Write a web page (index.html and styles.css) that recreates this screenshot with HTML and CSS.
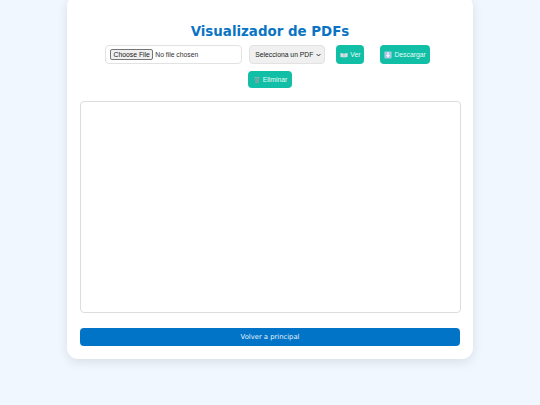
FILE: index.html
```html
<!DOCTYPE html>
<html lang="es">
  <head>
    <meta charset="UTF-8" />
    <meta name="viewport" content="width=device-width, initial-scale=1.0" />
    <title>Visualizador de PDFs</title>
    <link rel="stylesheet" href="styles.css">
  </head>
  <body>
    <div class="container">
      <h1 class="title">Visualizador de PDFs</h1>

      <div class="controls">
        <input type="file" class="file-input" />
        <select class="pdf-select">
          <option>Selecciona un PDF</option>
        </select>
        <button class="action action-ver">
          <svg class="icon" viewBox="0 0 10 10">
            <path d="M0.5 2.5 L4.8 3 V8 L0.5 7.5 Z M5.2 3 L9.5 2.5 V7.5 L5.2 8 Z" fill="#d5dde2" />
          </svg>
          Ver
        </button>
        <button class="action action-descargar">
          <svg class="icon" viewBox="0 0 10 10">
            <rect x="0.5" y="0.5" width="9" height="9" rx="1" fill="#a9c6e4" />
            <path d="M4.2 1.5 H5.8 V5 H7.6 L5 8.3 L2.4 5 H4.2 Z" fill="#f4f7fa" />
          </svg>
          Descargar
        </button>
      </div>

      <div class="controls controls-second">
        <button class="action action-eliminar">
          <svg class="icon" viewBox="0 0 10 10">
            <path d="M1.5 1.2 H8.5 V2.8 H1.5 Z" fill="#7fb5ad" />
            <path d="M2.2 3.2 H7.8 L7.2 9.2 H2.8 Z" fill="#6fa8a0" />
          </svg>
          Eliminar
        </button>
      </div>

      <div class="viewer"></div>

      <button class="back">Volver a principal</button>
    </div>
  </body>
</html>
```

FILE: styles.css
```css
body {
  margin: 0;
  height: 405px;
  overflow: hidden;
  background-color: #f0f7ff;
  font-family: "Liberation Sans", Arial, sans-serif;
}

.container {
  width: 380px;
  height: 336px;
  margin: -5px auto 0;
  padding: 28px 13px 0;
  background-color: white;
  border-radius: 11px;
  box-shadow: 0 3px 11px rgba(0, 0, 0, 0.1);
}

.title {
  margin: 0 0 4px;
  font-family: "DejaVu Sans", Verdana, sans-serif;
  font-size: 13.4px;
  line-height: 18px;
  font-weight: bold;
  text-align: center;
  color: #0a74c4;
}

.controls {
  display: flex;
  justify-content: center;
  align-items: center;
}

.controls-second {
  margin-top: 7px;
}

.file-input {
  box-sizing: border-box;
  width: 137px;
  height: 19px;
  padding: 3px 4px;
  border: 1px solid #e2e2e2;
  border-radius: 4px;
  font-family: "Liberation Sans", Arial, sans-serif;
  font-size: 6.8px;
  color: #333;
}

.file-input::file-selector-button {
  height: 11px;
  width: 43px;
  margin-right: 2px;
  padding: 0;
  border: 1px solid #767676;
  border-radius: 2px;
  background-color: #efefef;
  font-size: 6.8px;
  color: #222;
}

.pdf-select {
  box-sizing: border-box;
  width: 76px;
  height: 19px;
  margin-left: 7px;
  padding: 0 5px;
  border: 1px solid #e2e2e2;
  border-radius: 4px;
  appearance: none;
  background: #f0f0f0 url("data:image/svg+xml,%3Csvg xmlns='http://www.w3.org/2000/svg' viewBox='0 0 8 6'%3E%3Cpath d='M1 1.5 L4 4.5 L7 1.5' fill='none' stroke='%23222' stroke-width='1.5'/%3E%3C/svg%3E") no-repeat right 3px center / 5px 4px;
  font-family: "Liberation Sans", Arial, sans-serif;
  font-size: 6.8px;
  color: #222;
}

.action {
  display: flex;
  align-items: center;
  gap: 2px;
  height: 19px;
  padding: 0 4px;
  border: none;
  border-radius: 4px;
  background-color: #10bfa5;
  font-family: "Liberation Sans", Arial, sans-serif;
  font-size: 6.8px;
  color: #e8fbf7;
}

.action-ver {
  margin-left: 11px;
}

.action-descargar {
  margin-left: 16px;
  margin-right: 5px;
}

.action-eliminar {
  height: 17px;
  padding: 0 5px;
}

.icon {
  width: 8px;
  height: 8px;
}

.viewer {
  box-sizing: border-box;
  height: 212px;
  width: 381px;
  margin-top: 13px;
  border: 1px solid #dddddd;
  border-radius: 4px;
  background-color: white;
}

.back {
  display: block;
  width: 100%;
  height: 18px;
  margin-top: 15px;
  padding: 0;
  border: none;
  border-radius: 4px;
  background-color: #0274c8;
  font-family: "DejaVu Sans", Verdana, sans-serif;
  font-size: 6.8px;
  color: #e6f2fb;
}
```
